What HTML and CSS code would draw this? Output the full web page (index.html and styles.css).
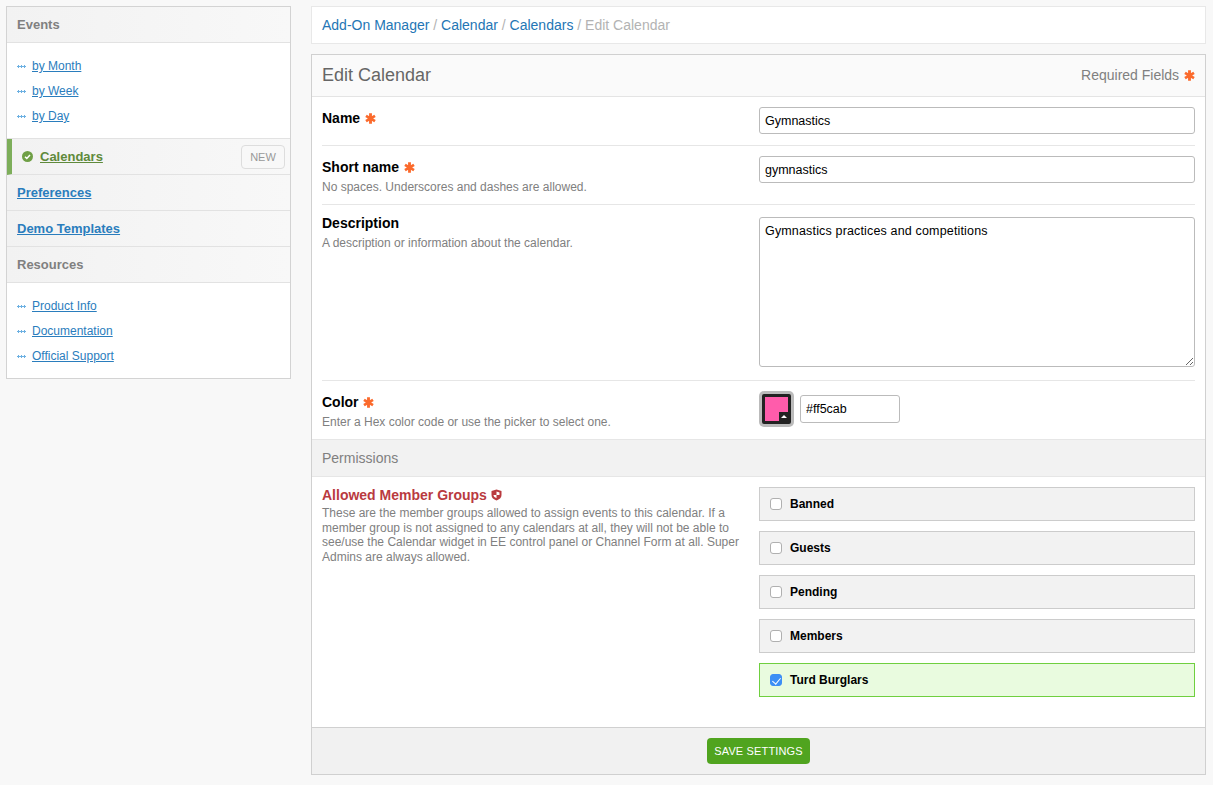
FILE: index.html
```html
<!DOCTYPE html>
<html lang="en">
  <head>
    <meta charset="UTF-8" />
    <title>Edit Calendar</title>
    <link rel="stylesheet" href="styles.css">
  </head>
  <body>
    <svg class="defs" width="0" height="0">
      <symbol id="req" viewBox="0 0 10 10">
        <path d="M5 .3v9.400M.9 2.600l8.200 4.800M9.100 2.600l-8.200 4.800" fill="none" stroke="#fb6a2c" stroke-width="2.600"/>
      </symbol>
    </svg>
    <div class="page">
      <div class="sidebar">
        <div class="side-head">Events</div>
        <ul class="side-list">
          <li><a href="#">by Month</a></li>
          <li><a href="#">by Week</a></li>
          <li><a href="#">by Day</a></li>
        </ul>
        <div class="side-item active">
          <svg class="check" viewBox="0 0 11 11" width="11" height="11">
            <circle cx="5.500" cy="5.500" r="5.500" fill="#6f9f45"/>
            <path d="M3 5.700l1.800 1.700L8 4" fill="none" stroke="#fff" stroke-width="1.500"/>
          </svg>
          <a href="#">Calendars</a>
          <span class="new-btn">NEW</span>
        </div>
        <div class="side-item"><a href="#">Preferences</a></div>
        <div class="side-item"><a href="#">Demo Templates</a></div>
        <div class="side-head">Resources</div>
        <ul class="side-list last">
          <li><a href="#">Product Info</a></li>
          <li><a href="#">Documentation</a></li>
          <li><a href="#">Official Support</a></li>
        </ul>
      </div>
      <div class="main">
        <div class="crumbs">
          <a href="#">Add-On Manager</a> <span>/</span>
          <a href="#">Calendar</a> <span>/</span>
          <a href="#">Calendars</a> <span>/ Edit Calendar</span>
        </div>
        <form class="panel" action="#">
          <div class="panel-head">
            <h1>Edit Calendar</h1>
            <div class="req-note">Required Fields <svg class="req"><use href="#req"/></svg></div>
          </div>
          <div class="row row-name">
            <div class="label-col">
              <label>Name <svg class="req"><use href="#req"/></svg></label>
            </div>
            <div><input class="text" type="text" value="Gymnastics" /></div>
          </div>
          <div class="row row-short">
            <div class="label-col">
              <label>Short name <svg class="req"><use href="#req"/></svg></label>
              <p>No spaces. Underscores and dashes are allowed.</p>
            </div>
            <div><input class="text" type="text" value="gymnastics" /></div>
          </div>
          <div class="row row-desc">
            <div class="label-col">
              <label>Description</label>
              <p>A description or information about the calendar.</p>
            </div>
            <div><textarea class="text">Gymnastics practices and competitions</textarea></div>
          </div>
          <div class="row row-color">
            <div class="label-col">
              <label>Color <svg class="req"><use href="#req"/></svg></label>
              <p>Enter a Hex color code or use the picker to select one.</p>
            </div>
            <div class="color-field">
              <div class="swatch"><div class="swatch-fill"><span class="swatch-tab"></span></div></div>
              <input class="text color-input" type="text" value="#ff5cab" />
            </div>
          </div>
          <div class="band">Permissions</div>
          <div class="row row-groups">
            <div class="label-col">
              <label class="danger">Allowed Member Groups
                <svg class="shield" viewBox="0 0 11 12" width="11" height="12">
                  <path d="M5.500 .5L10.500 2v4c0 2.800-2.200 4.500-5 5.500C2.700 10.500.5 8.800.5 6V2z" fill="#b93a3f"/>
                  <path d="M5.500 2.500L8.500 3.400V6H5.500zM5.500 6v3.200C3.900 8.500 2.500 7.500 2.500 6z" fill="#fff"/>
                </svg>
              </label>
              <p>These are the member groups allowed to assign events to this calendar. If a member group is not assigned to any calendars at all, they will not be able to see/use the Calendar widget in EE control panel or Channel Form at all. Super Admins are always allowed.</p>
            </div>
            <div class="groups">
              <label class="group"><input type="checkbox" /> Banned</label>
              <label class="group"><input type="checkbox" /> Guests</label>
              <label class="group"><input type="checkbox" /> Pending</label>
              <label class="group"><input type="checkbox" /> Members</label>
              <label class="group on"><input type="checkbox" checked /> Turd Burglars</label>
            </div>
          </div>
          <div class="panel-foot">
            <button class="save" type="button">SAVE SETTINGS</button>
          </div>
        </form>
      </div>
    </div>
  </body>
</html>
```

FILE: styles.css
```css
* {
  box-sizing: border-box;
}
html,
body {
  margin: 0;
  height: 785px;
  overflow: hidden;
}
body {
  background-color: #f8f8f8;
  font-family: "Liberation Sans", Arial, sans-serif;
  color: #000;
}
.defs {
  position: absolute;
}
a {
  color: #2a7dbd;
}
.page {
  display: flex;
  align-items: flex-start;
  gap: 20px;
  padding: 6px 7px 0 6px;
}

/* sidebar */
.sidebar {
  width: 285px;
  flex: none;
  background-color: #fff;
  border: 1px solid #d3d3d3;
}
.side-head {
  height: 36px;
  padding-left: 10px;
  line-height: 35px;
  font-size: 13px;
  font-weight: bold;
  color: #808080;
  background: linear-gradient(to right, #f2f2f2, #f8f8f8);
  border-bottom: 1px solid #e2e2e2;
}
.side-list {
  list-style: none;
  margin: 0;
  padding: 11px 0 0 25px;
  height: 96px;
  border-bottom: 1px solid #e2e2e2;
}
.side-list.last {
  height: 95px;
  border-bottom: none;
}
.side-list li {
  position: relative;
  height: 25px;
  line-height: 25px;
  font-size: 12px;
}
.side-list li::before {
  content: "";
  position: absolute;
  left: -15px;
  top: 11px;
  width: 9px;
  height: 3px;
  background: radial-gradient(circle at 1.500px 1.500px, #6cb0e2 1.100px, transparent 1.400px) 0 0 / 3px 3px repeat-x;
}
.side-item {
  display: flex;
  align-items: center;
  height: 36px;
  padding-left: 10px;
  font-size: 13px;
  font-weight: bold;
  background: linear-gradient(to right, #f2f2f2, #f8f8f8);
  border-bottom: 1px solid #e2e2e2;
}
.side-item.active {
  padding-left: 10px;
  border-left: 5px solid #7dae5a;
}
.side-item.active a {
  color: #5f8a3b;
  margin-left: 7px;
}
.check {
  flex: none;
}
.new-btn {
  margin-left: auto;
  margin-right: 5px;
  width: 44px;
  height: 24px;
  line-height: 22px;
  text-align: center;
  font-size: 11px;
  font-weight: normal;
  color: #999;
  background-color: #f8f8f8;
  border: 1px solid #ddd;
  border-radius: 4px;
}

/* main column */
.main {
  width: 895px;
  flex: none;
}
.crumbs {
  height: 38px;
  padding-left: 10px;
  line-height: 37px;
  font-size: 14px;
  background-color: #fff;
  border: 1px solid #e8e8e8;
  color: #b3b3b3;
}
.crumbs a {
  text-decoration: none;
  color: #2476b5;
}
.panel {
  display: block;
  margin: 10px 0 0;
  background-color: #fff;
  border: 1px solid #d0d0d0;
}
.panel-head {
  display: flex;
  justify-content: space-between;
  align-items: center;
  height: 42px;
  padding: 0 10px;
  background-color: #fafafa;
  border-bottom: 1px solid #e4e4e4;
}
h1 {
  margin: 0;
  font-size: 18px;
  font-weight: normal;
  color: #666;
}
.req-note {
  padding-bottom: 2px;
  font-size: 14px;
  color: #808080;
}
.req {
  display: inline-block;
  width: 11px;
  height: 11px;
  margin-left: 1px;
  vertical-align: -1px;
}

/* form rows */
.row {
  display: grid;
  grid-template-columns: 437px 436px;
  margin: 0 10px;
  border-bottom: 1px solid #e6e6e6;
}
.row-name {
  height: 49px;
  padding-top: 10px;
}
.row-short {
  height: 59px;
  padding-top: 10px;
}
.row-desc {
  height: 176px;
  padding-top: 7px;
}
.row-desc .text {
  margin-top: 5px;
}
.row-color {
  height: 58px;
  padding-top: 10px;
  border-bottom: none;
}
.row-groups {
  height: 250px;
  padding-top: 10px;
  border-bottom: none;
}
.label-col {
  padding-right: 14px;
}
.label-col label {
  display: block;
  font-size: 14px;
  font-weight: bold;
  line-height: 20px;
  margin-top: 1px;
}
.label-col .danger {
  color: #b93a3f;
  margin-top: -2px;
}
.label-col p {
  margin: 3px 0 0;
  font-size: 12px;
  line-height: 14.700px;
  color: #808080;
}
.label-col .danger + p {
  margin-top: 1px;
}
.shield {
  vertical-align: -1px;
}
.text {
  display: block;
  width: 100%;
  height: 27px;
  padding: 0 5px;
  font-family: "Liberation Sans", Arial, sans-serif;
  font-size: 12.500px;
  color: #000;
  background-color: #fff;
  border: 1px solid #bbb;
  border-radius: 3px;
}
textarea.text {
  height: 150px;
  padding: 6px 5px;
  line-height: 15px;
  letter-spacing: .16px;
}
.color-field {
  display: flex;
  align-items: center;
  gap: 6px;
  height: 36px;
}
.swatch {
  width: 35px;
  height: 36px;
  padding: 3px;
  background-color: #bbb;
  border-radius: 5px;
}
.swatch-fill {
  position: relative;
  height: 100%;
  border: 3px solid #222;
  border-radius: 2px;
  background-color: #ff5cab;
}
.swatch-tab {
  position: absolute;
  right: -1px;
  bottom: -1px;
  width: 10px;
  height: 10px;
  background-color: #222;
}
.swatch-tab::after {
  content: "";
  position: absolute;
  left: 2px;
  top: 3px;
  border: 3px solid transparent;
  border-top: none;
  border-bottom: 3px solid #fff;
}
.color-input {
  width: 100px;
  height: 28px;
}
.band {
  height: 38px;
  padding-left: 10px;
  line-height: 36px;
  font-size: 14px;
  color: #808080;
  background-color: #f2f2f2;
  border-top: 1px solid #e6e6e6;
  border-bottom: 1px solid #e6e6e6;
}

/* member groups */
.groups {
  display: flex;
  flex-direction: column;
  gap: 10px;
}
.group {
  display: flex;
  align-items: center;
  gap: 8px;
  height: 34px;
  padding-left: 10px;
  font-size: 12px;
  font-weight: bold;
  background-color: #f2f2f2;
  border: 1px solid #ccc;
}
.group input {
  appearance: none;
  position: relative;
  width: 12px;
  height: 12px;
  margin: 0;
  background-color: #fff;
  border: 1px solid #b0b0b0;
  border-radius: 3px;
}
.group input:checked {
  background-color: #3d8ff5;
  border-color: #3d8ff5;
}
.group input:checked::after {
  content: "";
  position: absolute;
  left: 3px;
  top: 1px;
  width: 4px;
  height: 7px;
  border: solid #fff;
  border-width: 0 1.500px 1.500px 0;
  transform: rotate(40deg);
}
.group.on {
  background-color: #e9fbdf;
  border-color: #6fcf3f;
}
.panel-foot {
  display: flex;
  justify-content: center;
  align-items: center;
  height: 47px;
  background-color: #f1f1f1;
  border-top: 1px solid #d0d0d0;
}
.save {
  width: 103px;
  height: 26px;
  padding: 0;
  font-family: "Liberation Sans", Arial, sans-serif;
  font-size: 11px;
  letter-spacing: .15px;
  color: #fff;
  background-color: #50a41f;
  border: none;
  border-radius: 4px;
}
```
